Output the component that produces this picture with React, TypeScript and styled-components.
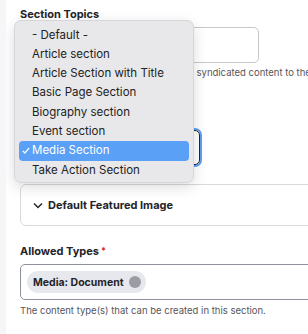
import styled, { createGlobalStyle } from 'styled-components';

const Global = createGlobalStyle`
    body {
        margin: 0;
        background: #ffffff;
        font-family: Inter, "Liberation Sans", sans-serif;
        color: #232429;
    }
`

const Page = styled.div`
    position: relative;
    width: 308px;
    height: 334px;
    overflow: hidden;
    background: #ffffff;
    border-left: 6px solid #f6f6f8;
    box-sizing: border-box;
`

const Form = styled.div`
    display: flex;
    flex-direction: column;
    align-items: flex-start;
    padding: 6px 0 0 14px;
    width: 420px;
`

const Label = styled.div<{ $gap?: number }>`
    font-size: 11px;
    font-weight: 700;
    line-height: 16px;
    margin-top: ${p => p.$gap ?? 0}px;
    white-space: nowrap;
`

const Required = styled.span`
    color: #d72222;
    margin-left: 2px;
    font-size: 9px;
    vertical-align: top;
`

const TextInput = styled.div<{ $w?: number; $dark?: boolean }>`
    box-sizing: border-box;
    height: 36px;
    width: ${p => (p.$w ? `${p.$w}px` : '100%')};
    margin-top: 5px;
    border: 1px solid ${p => (p.$dark ? '#8e929c' : '#c5c7cd')};
    border-radius: 5px;
    display: flex;
    align-items: center;
    padding: 0 6px;
`

const Help = styled.div<{ $gap?: number }>`
    font-size: 9.5px;
    line-height: 14px;
    color: #55565b;
    margin-top: ${p => p.$gap ?? 3}px;
    white-space: nowrap;
`

const SelectBox = styled.div`
    box-sizing: border-box;
    width: 180px;
    height: 35px;
    margin-top: 18px;
    border: 1px solid #222330;
    border-radius: 5px;
    box-shadow: 0 0 0 2px #5c9ff0;
`

const Details = styled.div`
    box-sizing: border-box;
    width: 100%;
    height: 42px;
    margin-top: 19px;
    border: 1px solid #d8d9de;
    border-radius: 6px;
    display: flex;
    align-items: center;
    gap: 5px;
    padding-left: 12px;
    font-size: 11px;
    font-weight: 700;
`

const Chip = styled.div`
    display: inline-flex;
    align-items: center;
    gap: 5px;
    height: 22px;
    padding: 0 5px 0 6px;
    border-radius: 11px;
    background: #e7e8ed;
    font-size: 10.5px;
    font-weight: 700;
`

const Dot = styled.span`
    width: 12px;
    height: 12px;
    border-radius: 50%;
    background: #9a9ba3;
`

const Menu = styled.div`
    position: absolute;
    left: 8px;
    top: 20px;
    width: 180px;
    height: 163px;
    box-sizing: border-box;
    padding: 4.5px 4px 4px;
    background: #e8e8ea;
    border: 1px solid #d6d6d9;
    border-radius: 7px;
    box-shadow: 0 4px 14px rgba(0, 0, 0, 0.14);
`

const Option = styled.div<{ $active?: boolean }>`
    position: relative;
    height: 19.3px;
    line-height: 19.3px;
    padding-left: 13px;
    font-size: 11.5px;
    border-radius: 4px;
    white-space: nowrap;
    overflow: hidden;
    color: ${p => (p.$active ? '#ffffff' : '#222')};
    background: ${p => (p.$active ? '#5aa0f7' : 'transparent')};
`

const Check = styled.svg`
    position: absolute;
    left: 3px;
    top: 6px;
`

const options = [
    '- Default -',
    'Article section',
    'Article Section with Title',
    'Basic Page Section',
    'Biography section',
    'Event section',
    'Media Section',
    'Take Action Section',
]

const App = () => {
    return (
        <>
            <Global />
            <Page>
                <Form>
                    <Label>Section Topics</Label>
                    <TextInput $w={239} />
                    <Help>Select the topics used to pull in related syndicated content to the section.</Help>
                    <Label $gap={16}>Section Type</Label>
                    <SelectBox />
                    <Details>
                        <svg width="10" height="7" viewBox="0 0 10 7">
                            <path d="M1 1.5 L5 5.5 L9 1.5" fill="none" stroke="#232429" strokeWidth="1.5" />
                        </svg>
                        Default Featured Image
                    </Details>
                    <Label $gap={17}>Allowed Types<Required>*</Required></Label>
                    <TextInput $dark>
                        <Chip>Media: Document<Dot /></Chip>
                    </TextInput>
                    <Help $gap={4}>The content type(s) that can be created in this section.</Help>
                </Form>
                <Menu>
                    {options.map(o => (
                        <Option key={o} $active={o === 'Media Section'}>
                            {o === 'Media Section' ? (
                                <Check width="8" height="7" viewBox="0 0 8 7">
                                    <path d="M0.8 3.8 L2.9 6 L7.2 0.8" fill="none" stroke="#ffffff" strokeWidth="1.2" />
                                </Check>
                            ) : null}
                            {o}
                        </Option>
                    ))}
                </Menu>
            </Page>
        </>
    )
}

export default App
